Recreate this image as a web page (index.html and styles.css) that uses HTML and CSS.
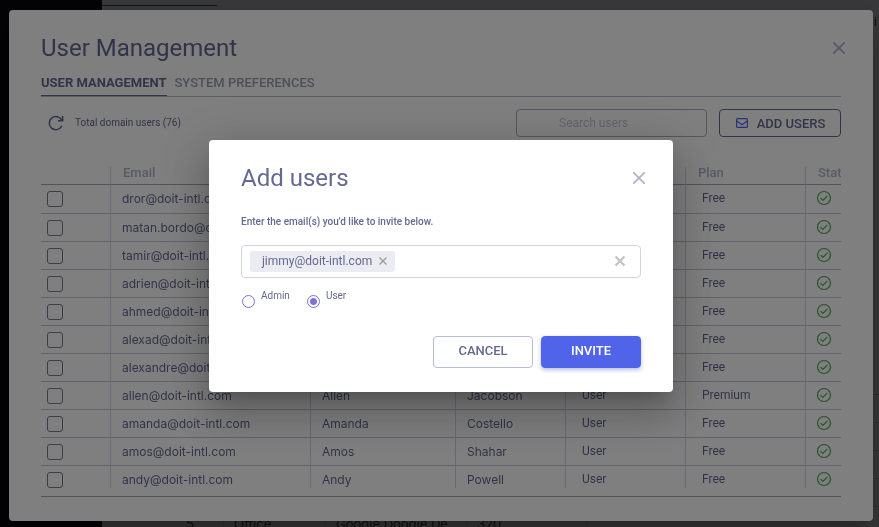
FILE: index.html
```html
<!DOCTYPE html>
<html lang="en">
<head>
<meta charset="utf-8">
<title>User Management</title>
<meta name="viewport" content="width=device-width, initial-scale=1">
<link rel="stylesheet" href="styles.css">
</head>
<body>
<svg class="defs" aria-hidden="true">
  <symbol id="close" viewBox="0 0 14 14"><path d="M1.800 1.800l10.400 10.400M12.200 1.800L1.800 12.200" fill="none" stroke="currentColor" stroke-width="1.800" stroke-linecap="round"/></symbol>
  <symbol id="ok" viewBox="0 0 16 16"><circle cx="8" cy="8" r="6.500" fill="none" stroke="currentColor" stroke-width="1.200"/><path d="M4.600 8.200l2.300 2.300 4.500-4.700" fill="none" stroke="currentColor" stroke-width="1.200"/></symbol>
</svg>

<div class="app">
  <aside class="sidebar"></aside>
  <main class="report">
    <div class="report-tabs"><span class="report-tab"></span></div>
    <div class="report-body">i</div>
    <div class="report-line"></div>
    <div class="report-line"></div>
    <div class="report-line"></div>
    <div class="report-line"></div>
    <div class="report-row"><span>5</span><span>Office</span><span>Google Doodle De</span><span>320</span><span></span></div>
  </main>
</div>

<div class="overlay">
  <section class="dialog manage" role="dialog" aria-labelledby="manage-title">
    <header class="dialog-head">
      <h1 id="manage-title">User Management</h1>
      <button class="icon-button" aria-label="Close"><svg><use href="#close"/></svg></button>
    </header>
    <nav class="tabs">
      <a class="tab active" href="#users">User Management</a>
      <a class="tab" href="#system">System Preferences</a>
    </nav>
    <div class="toolbar">
      <button class="refresh" aria-label="Refresh"><svg viewBox="0 0 16 16"><path d="M13.800 5.200A6.600 6.600 0 1 0 13.600 11.400" fill="none" stroke="currentColor" stroke-width="1.500" stroke-linecap="round"/><path d="M14.600 1v4.700H10" fill="none" stroke="currentColor" stroke-width="1.600"/></svg></button>
      <span class="total">Total domain users (76)</span>
      <input class="search" type="search" placeholder="Search users" aria-label="Search users">
      <button class="button add"><svg viewBox="0 0 14 12"><rect x="1.600" y="1.600" width="10.800" height="8.800" rx="1" fill="none" stroke="currentColor" stroke-width="1.200"/><path d="M1.800 4L7 7.800 12.200 4" fill="none" stroke="currentColor" stroke-width="1.200"/></svg>Add users</button>
    </div>
    <div class="grid">
      <div class="scroller">
        <table>
          <colgroup><col class="c-check"><col class="c-email"><col class="c-first"><col class="c-last"><col class="c-role"><col class="c-plan"><col class="c-status"></colgroup>
          <thead><tr><th></th><th>Email</th><th></th><th></th><th></th><th>Plan</th><th>Status</th></tr></thead>
          <tbody>
            <tr><td><input type="checkbox" aria-label="Select dror"></td><td>dror@doit-intl.com</td><td></td><td></td><td></td><td>Free</td><td><svg class="ok"><use href="#ok"/></svg></td></tr>
            <tr><td><input type="checkbox" aria-label="Select matan"></td><td>matan.bordo@doit-intl.com</td><td></td><td></td><td></td><td>Free</td><td><svg class="ok"><use href="#ok"/></svg></td></tr>
            <tr><td><input type="checkbox" aria-label="Select tamir"></td><td>tamir@doit-intl.com</td><td></td><td></td><td></td><td>Free</td><td><svg class="ok"><use href="#ok"/></svg></td></tr>
            <tr><td><input type="checkbox" aria-label="Select adrien"></td><td>adrien@doit-intl.com</td><td></td><td></td><td></td><td>Free</td><td><svg class="ok"><use href="#ok"/></svg></td></tr>
            <tr><td><input type="checkbox" aria-label="Select ahmed"></td><td>ahmed@doit-intl.com</td><td></td><td></td><td></td><td>Free</td><td><svg class="ok"><use href="#ok"/></svg></td></tr>
            <tr><td><input type="checkbox" aria-label="Select alexad"></td><td>alexad@doit-intl.com</td><td></td><td></td><td></td><td>Free</td><td><svg class="ok"><use href="#ok"/></svg></td></tr>
            <tr><td><input type="checkbox" aria-label="Select alexandre"></td><td>alexandre@doit-intl.com</td><td></td><td></td><td></td><td>Free</td><td><svg class="ok"><use href="#ok"/></svg></td></tr>
            <tr><td><input type="checkbox" aria-label="Select allen"></td><td>allen@doit-intl.com</td><td>Allen</td><td>Jacobson</td><td>User</td><td>Premium</td><td><svg class="ok"><use href="#ok"/></svg></td></tr>
            <tr><td><input type="checkbox" aria-label="Select amanda"></td><td>amanda@doit-intl.com</td><td>Amanda</td><td>Costello</td><td>User</td><td>Free</td><td><svg class="ok"><use href="#ok"/></svg></td></tr>
            <tr><td><input type="checkbox" aria-label="Select amos"></td><td>amos@doit-intl.com</td><td>Amos</td><td>Shahar</td><td>User</td><td>Free</td><td><svg class="ok"><use href="#ok"/></svg></td></tr>
            <tr><td><input type="checkbox" aria-label="Select andy"></td><td>andy@doit-intl.com</td><td>Andy</td><td>Powell</td><td>User</td><td>Free</td><td><svg class="ok"><use href="#ok"/></svg></td></tr>
          </tbody>
        </table>
      </div>
    </div>
  </section>
</div>

<div class="overlay">
  <form class="dialog invite" role="dialog" aria-labelledby="invite-title">
    <header class="dialog-head">
      <h2 id="invite-title">Add users</h2>
      <button type="button" class="icon-button" aria-label="Close"><svg><use href="#close"/></svg></button>
    </header>
    <label class="prompt" for="emails">Enter the email(s) you'd like to invite below.</label>
    <div class="emails">
      <span class="chip">jimmy@doit-intl.com<button type="button" class="chip-x" aria-label="Remove"><svg viewBox="0 0 10 10"><path d="M1.500 1.500l7 7M8.500 1.500l-7 7" stroke="currentColor" stroke-width="1.300"/></svg></button></span>
      <input id="emails" type="text">
      <button type="button" class="clear" aria-label="Clear"><svg viewBox="0 0 12 12"><path d="M1.500 1.500l9 9M10.500 1.500l-9 9" stroke="currentColor" stroke-width="2.400"/></svg></button>
    </div>
    <div class="roles">
      <input type="radio" name="role" id="admin"><label for="admin">Admin</label>
      <input type="radio" name="role" id="user" checked><label for="user">User</label>
    </div>
    <footer class="actions">
      <button type="button" class="button">Cancel</button>
      <button type="button" class="button primary">Invite</button>
    </footer>
  </form>
</div>
</body>
</html>
```

FILE: styles.css
```css
* { box-sizing: border-box; }
body { margin: 0; font-family: Roboto, sans-serif; font-size: 13px; color: #636990; }
h1, h2 { margin: 0; font-size: 24px; line-height: 32px; font-weight: 400; }
button { font: inherit; color: inherit; background: none; border: 0; padding: 0; display: flex; align-items: center; justify-content: center; }
.defs { position: absolute; width: 0; height: 0; }

.app { display: flex; height: 100vh; overflow: hidden; background: #e6e6e6; color: #444; }
.sidebar { flex: 0 0 102px; background: #0d0b18; }
.report { flex: 1; display: flex; flex-direction: column; min-width: 0; }
.report-tabs { height: 10px; background: #e4e7ee; }
.report-tab { display: block; width: 115px; height: 6px; border-bottom: 1px solid #555; }
.report-body { flex: 1; padding: 4px 2px; text-align: right; border-bottom: 1px solid #aaa; }
.report-line { height: 28px; border-bottom: 1px solid #bbb; }
.report-row { display: grid; grid-template-columns: 122px 102px 141px 120px 1fr; height: 20px; line-height: 34px; font-family: Inter, sans-serif; }
.report-row span { padding-left: 10px; border-right: 1px solid #ccc; white-space: nowrap; }
.report-row span:first-child { text-align: right; padding-right: 29px; }

.overlay { position: fixed; inset: 0; display: flex; align-items: center; justify-content: center; padding: 10px 6px 6px 9px; background: rgba(0, 0, 0, .5); }
.dialog { background: #fff; border-radius: 4px; padding: 0 32px; box-shadow: 0 11px 15px -7px rgba(0,0,0,.2), 0 24px 38px 3px rgba(0,0,0,.14), 0 9px 46px 8px rgba(0,0,0,.12); }
.dialog-head { display: flex; justify-content: space-between; align-items: center; }
.icon-button { width: 14px; height: 14px; color: #b0b3c8; margin-right: -5px; }
.icon-button svg { width: 14px; height: 14px; }

.manage { align-self: stretch; flex: 1; min-width: 0; display: flex; flex-direction: column; padding-top: 22px; padding-bottom: 24px; }
.tabs { display: flex; gap: 8px; margin-top: 9px; border-bottom: 1px solid #b8bac9; }
.tab { height: 23px; line-height: 20px; font-weight: 500; text-transform: uppercase; text-decoration: none; color: #9a9db4; }
.tab.active { color: #636990; font-weight: 700; border-bottom: 1px solid #636990; }
.toolbar { display: flex; align-items: center; margin-top: 12px; }
.refresh { width: 16px; height: 16px; margin: 0 11px 0 7px; }
.refresh svg { width: 16px; height: 16px; }
.total { flex: 1; padding-bottom: 2px; font-size: 10px; }
.search { width: 191px; height: 28px; padding: 0 42px; border: 1px solid #a9acc0; border-radius: 4px; background: none; font: inherit; font-size: 12px; }
.search::placeholder { color: #c5c7d4; opacity: 1; }
.button { height: 32px; min-width: 100px; padding-bottom: 2px; border: 1px solid #b9bbcf; border-radius: 4px; font-weight: 500; text-transform: uppercase; }
.add { height: 28px; width: 122px; margin-left: 12px; padding: 0; gap: 8px; border-color: #636990; }
.add svg { width: 14px; height: 12px; color: #5965ea; }

.grid { flex: 1; min-height: 0; display: flex; margin-top: 30px; padding-bottom: 8px; border-bottom: 1px solid #a4a7b8; }
.scroller { flex: 1; overflow: hidden; }
table { width: 884px; table-layout: fixed; border-collapse: separate; border-spacing: 0; font-family: Inter, sans-serif; font-size: 12px; }
.c-check { width: 70px; } .c-email { width: 200px; } .c-first { width: 145px; } .c-last { width: 110px; } .c-role, .c-plan, .c-status { width: 120px; }
th, td { padding: 0 11px; text-align: left; border-right: 1px solid #d5d7e2; }
th { height: 18px; padding: 0 12px 6px; line-height: 11px; font-family: Roboto, sans-serif; font-size: 13px; font-weight: 500; color: #b0b3c8; border-bottom: 1px solid #a4a7b8; }
td { height: 28px; line-height: 24px; border-bottom: 1px solid #c4c6d3; white-space: nowrap; overflow: hidden; }
tr:first-child td { height: 29px; }
td:first-child { padding-left: 6px; }
td:nth-child(5), td:nth-child(6) { padding: 0 16px 2px; font-family: Roboto, sans-serif; }
td:last-child { padding: 0 10px 2px; color: #4da554; }
td input { display: block; appearance: none; width: 16px; height: 16px; margin: 0; border: 1px solid #777b89; border-radius: 3px; }
.ok { display: block; width: 16px; height: 16px; }

.invite { width: 464px; padding-top: 22px; padding-bottom: 24px; }
.prompt { display: block; margin-top: 21px; font-size: 10px; line-height: 14px; font-weight: 500; }
.emails { display: flex; align-items: center; height: 33px; margin-top: 16px; padding: 0 14px 0 8px; border: 1px solid #d3d4df; border-radius: 4px; }
.emails input { flex: 1; min-width: 0; border: 0; outline: 0; background: none; }
.chip { display: flex; align-items: center; gap: 6px; height: 21px; padding: 0 7px 0 12px; border-radius: 3px; background: #ebecf1; font-size: 12px; }
.chip-x svg { width: 10px; height: 10px; color: #999; }
.clear { width: 12px; height: 12px; color: #c4c4c4; }
.clear svg { width: 12px; height: 12px; }
.roles { display: flex; align-items: flex-start; margin-top: 11px; font-size: 10px; line-height: 14px; }
.roles input { appearance: none; width: 13px; height: 13px; margin: 6px 6px 0 1px; border: 1px solid #7b72d4; border-radius: 50%; }
.roles input:checked { background: radial-gradient(circle, #7b72d4 3px, transparent 4px); }
.roles label { margin-right: 16px; }
.actions { display: flex; justify-content: flex-end; gap: 8px; margin-top: 28px; }
.primary { color: #fff; background: #5064ea; border-color: #5064ea; box-shadow: 0 2px 4px rgba(60, 70, 170, .35); }
```
